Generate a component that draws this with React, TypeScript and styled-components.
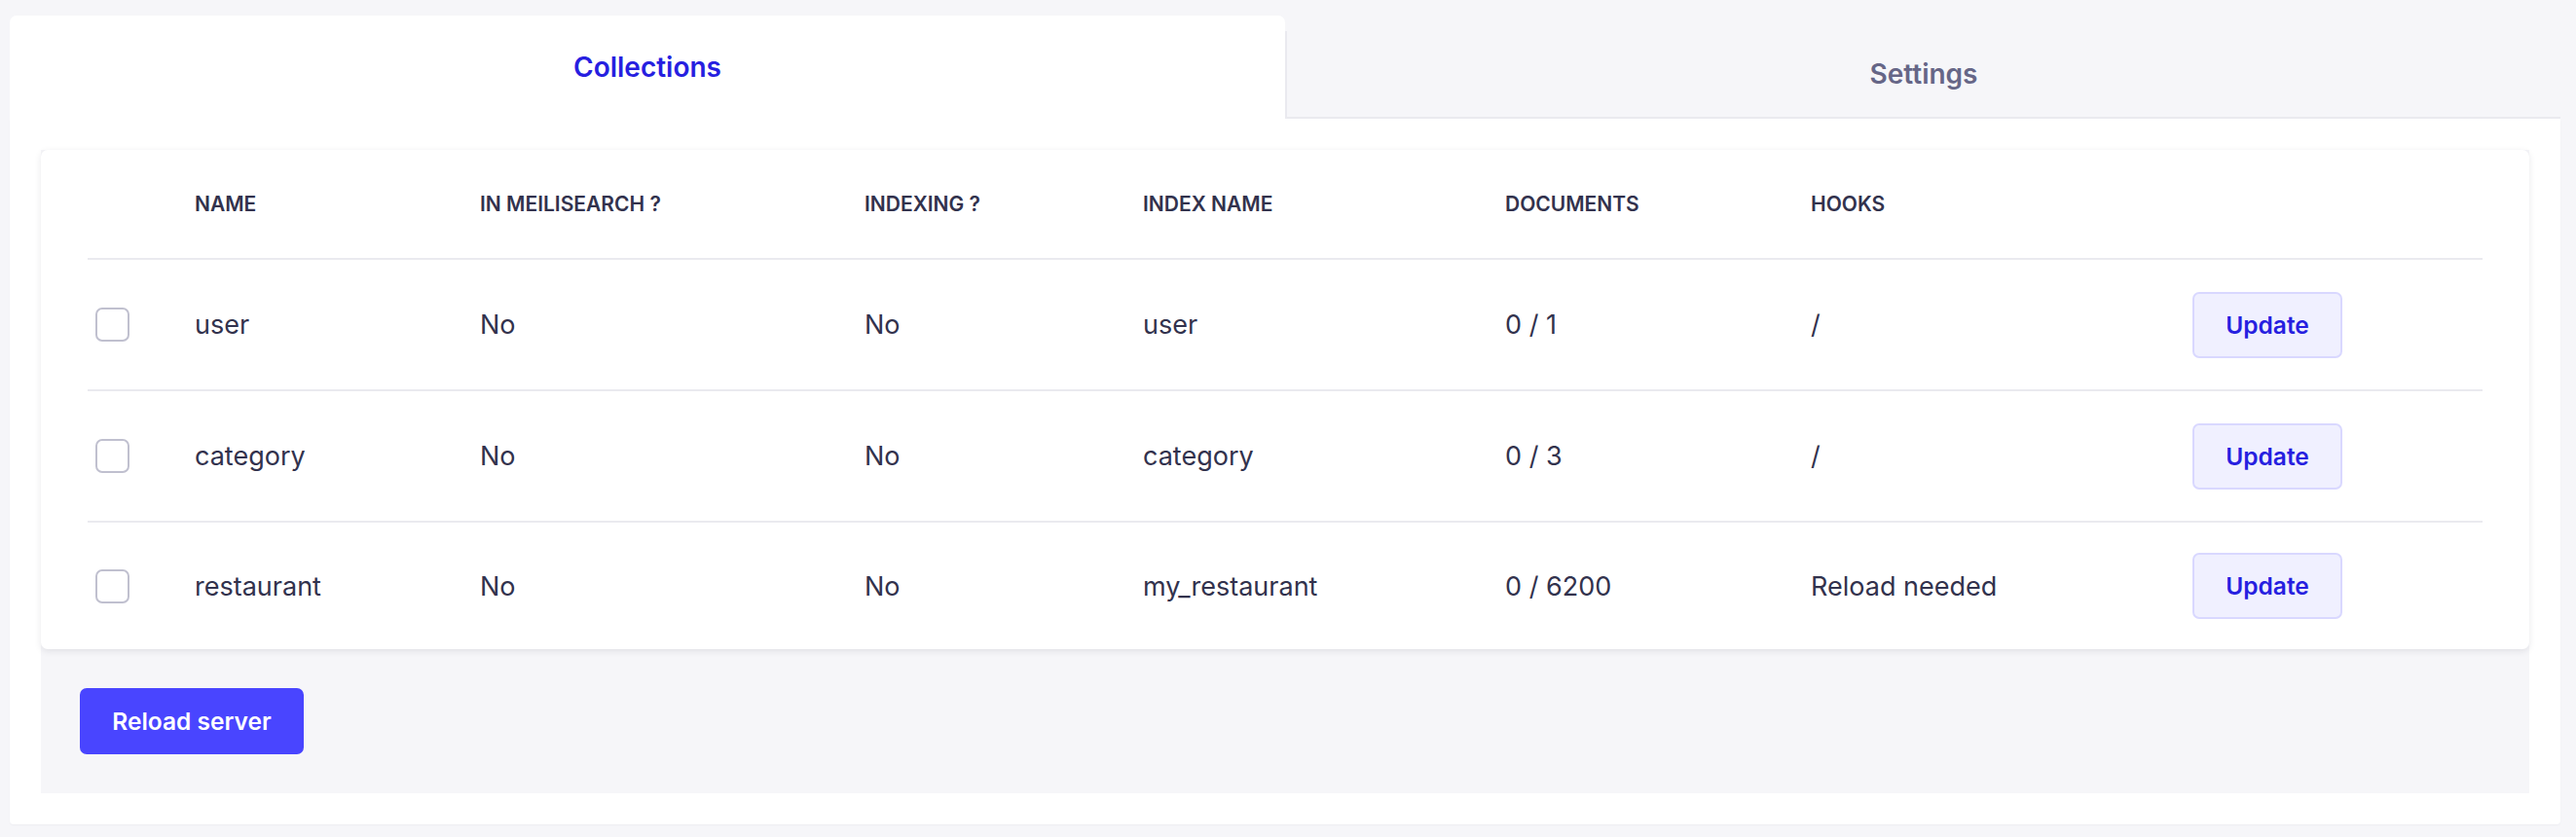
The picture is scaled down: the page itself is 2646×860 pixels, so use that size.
import React from 'react';
import styled, { createGlobalStyle } from 'styled-components';

const GlobalStyle = createGlobalStyle`
    body {
        margin: 0;
        background: #f6f6f9;
        font-family: Inter, "Noto Sans", sans-serif;
        color: #32324d;
    }
`

type Collection = {
    name: string
    inMeili: string
    indexing: string
    indexName: string
    documents: string
    hooks: string
}

const collections: Collection[] = [
    { name: 'user', inMeili: 'No', indexing: 'No', indexName: 'user', documents: '0 / 1', hooks: '/' },
    { name: 'category', inMeili: 'No', indexing: 'No', indexName: 'category', documents: '0 / 3', hooks: '/' },
    { name: 'restaurant', inMeili: 'No', indexing: 'No', indexName: 'my_restaurant', documents: '0 / 6200', hooks: 'Reload needed' },
]

const headers = ['', 'Name', 'In Meilisearch ?', 'Indexing ?', 'Index name', 'Documents', 'Hooks', '']

const App: React.FC = () => {
    return (
        <Page>
            <GlobalStyle />
            <Panel>
                <Tabs>
                    <Tab active>Collections</Tab>
                    <Tab>Settings</Tab>
                </Tabs>
                <Content>
                    <Inner>
                        <Card>
                            <HeadRow>
                                {headers.map((h, i) => (
                                    <HeadCell key={i}>{h}</HeadCell>
                                ))}
                            </HeadRow>
                            {collections.map((c) => (
                                <Row key={c.name}>
                                    <Cell><Checkbox type="checkbox" /></Cell>
                                    <Cell>{c.name}</Cell>
                                    <Cell>{c.inMeili}</Cell>
                                    <Cell>{c.indexing}</Cell>
                                    <Cell>{c.indexName}</Cell>
                                    <Cell>{c.documents}</Cell>
                                    <Cell>{c.hooks}</Cell>
                                    <Cell><UpdateButton>Update</UpdateButton></Cell>
                                </Row>
                            ))}
                        </Card>
                        <Footer>
                            <ReloadButton>Reload server</ReloadButton>
                        </Footer>
                    </Inner>
                </Content>
            </Panel>
        </Page>
    )
}

export default App;

const columns = '102px 293px 395px 286px 372px 314px 392px 1fr'

const Page = styled.div`
    padding: 16px 16px 13px 10px;
`

const Panel = styled.div`
    display: flex;
    flex-direction: column;
`

const Tabs = styled.div`
    display: grid;
    grid-template-columns: 1fr 1fr;
    align-items: end;
    height: 106px;
`

const Tab = styled.div<{ active?: boolean }>`
    display: flex;
    align-items: center;
    justify-content: center;
    font-size: 28px;
    font-weight: 600;
    box-sizing: border-box;
    height: ${p => p.active ? '106px' : '90px'};
    color: ${p => p.active ? '#271fe0' : '#666687'};
    background: ${p => p.active ? '#ffffff' : '#f6f6f9'};
    border-radius: ${p => p.active ? '7px 7px 0 0' : '0'};
    border-bottom: ${p => p.active ? 'none' : '2px solid #eaeaef'};
    border-left: ${p => p.active ? 'none' : '2px solid #eaeaef'};
`

const Content = styled.div`
    background: #fff;
    padding: 32px;
    border-radius: 0 0 4px 4px;
    box-shadow: 0 1px 2px rgba(33, 33, 52, 0.04);
`

const Inner = styled.div`
    background: #f6f6f9;
`

const Card = styled.div`
    background: #fff;
    border-radius: 7px;
    box-shadow: 0 2px 7px rgba(33, 33, 52, 0.1);
    padding: 0 48px;
`

const HeadRow = styled.div`
    display: grid;
    grid-template-columns: ${columns};
    align-items: center;
    height: 111px;
    border-bottom: 2px solid #eaeaef;
`

const HeadCell = styled.div`
    padding-left: 8px;
    font-size: 21px;
    font-weight: 600;
    text-transform: uppercase;
    color: #32324d;
`

const Row = styled.div`
    display: grid;
    grid-template-columns: ${columns};
    align-items: center;
    height: 133px;
    & + & {
        border-top: 2px solid #eaeaef;
    }
    &:last-child {
        height: 130px;
    }
`

const Cell = styled.div`
    padding-left: 8px;
    font-size: 27px;
    color: #32324d;
    display: flex;
    align-items: center;
`

const Checkbox = styled.input`
    appearance: none;
    margin: 0;
    width: 35px;
    height: 35px;
    box-sizing: border-box;
    border: 2px solid #c0c0cf;
    border-radius: 7px;
    background: #fff;
`

const UpdateButton = styled.button`
    width: 154px;
    height: 68px;
    background: #f0f0ff;
    border: 2px solid #d9d8ff;
    border-radius: 7px;
    color: #271fe0;
    font-family: Inter, sans-serif;
    font-size: 24.5px;
    font-weight: 600;
`

const Footer = styled.div`
    padding: 40px;
`

const ReloadButton = styled.button`
    width: 230px;
    height: 68px;
    background: #4945ff;
    border: 2px solid #4945ff;
    border-radius: 7px;
    color: #fff;
    font-family: Inter, sans-serif;
    font-size: 24.5px;
    font-weight: 600;
`
